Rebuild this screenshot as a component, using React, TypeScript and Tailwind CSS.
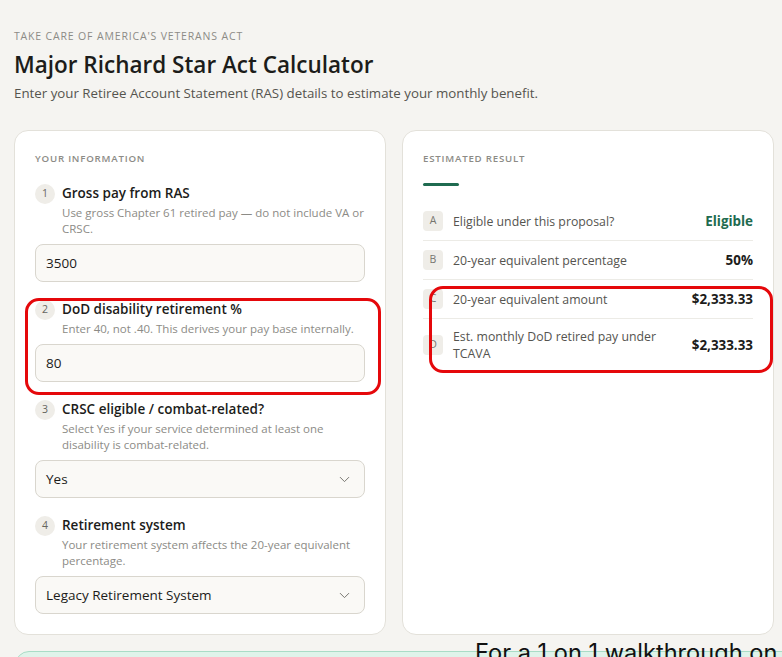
import { ChevronDown } from "lucide-react";

const font = { fontFamily: '"Open Sans", "Noto Sans", sans-serif' };

type Field = {
  n: string;
  label: string;
  hint: string;
  value: string;
  select?: boolean;
};

const fields: Field[] = [
  {
    n: "1",
    label: "Gross pay from RAS",
    hint: "Use gross Chapter 61 retired pay — do not include VA or CRSC.",
    value: "3500",
  },
  {
    n: "2",
    label: "DoD disability retirement %",
    hint: "Enter 40, not .40. This derives your pay base internally.",
    value: "80",
  },
  {
    n: "3",
    label: "CRSC eligible / combat-related?",
    hint: "Select Yes if your service determined at least one disability is combat-related.",
    value: "Yes",
    select: true,
  },
  {
    n: "4",
    label: "Retirement system",
    hint: "Your retirement system affects the 20-year equivalent percentage.",
    value: "Legacy Retirement System",
    select: true,
  },
];

const rows = [
  { k: "A", label: "Eligible under this proposal?", value: "Eligible", green: true },
  { k: "B", label: "20-year equivalent percentage", value: "50%" },
  { k: "C", label: "20-year equivalent amount", value: "$2,333.33" },
  { k: "D", label: "Est. monthly DoD retired pay under TCAVA", value: "$2,333.33" },
];

function FieldBlock({ f }: { f: Field }) {
  return (
    <div className="flex flex-col">
      <div className="flex items-start gap-[7px]">
        <span className="mt-px flex h-5 w-5 shrink-0 items-center justify-center rounded-full bg-[#efede8] text-[10.5px] text-[#66655f]">
          {f.n}
        </span>
        <div className="flex flex-col">
          <span className="text-[13.5px] font-semibold leading-5 text-[#1c1c1a]">{f.label}</span>
          <span className="mt-0.5 text-[11.5px] leading-4 text-[#8c8b86]">{f.hint}</span>
        </div>
      </div>
      <div className="mt-[7px] flex h-[38px] items-center justify-between rounded-lg border border-[#d9d6ce] bg-[#faf9f6] pl-[10px] pr-[11px] text-[13.5px] text-[#1c1c1a]">
        <span>{f.value}</span>
        {f.select && <ChevronDown size={17} strokeWidth={1.4} className="text-[#76756f]" />}
      </div>
    </div>
  );
}

export default function App() {
  return (
    <div className="relative min-h-[657px] overflow-hidden bg-[#f5f4f1]" style={font}>
      <div className="w-[760px] pl-[14px] pt-[28px]">
        <div className="text-[10.5px] font-medium uppercase leading-4 tracking-[0.08em] text-[#8c8b86]">
          Take care of America's Veterans Act
        </div>
        <h1 className="mt-[7px] text-[22.5px] font-semibold leading-7 text-[#1c1c1a]">
          Major Richard Star Act Calculator
        </h1>
        <p className="mt-[4px] text-[13.3px] leading-5 text-[#55544f]">
          Enter your Retiree Account Statement (RAS) details to estimate your monthly benefit.
        </p>
      </div>

      <div className="ml-[14px] mt-[27px] grid w-[760px] grid-cols-2 gap-4">
        <div className="relative rounded-[14px] border border-[#e3e1da] bg-white p-5">
          <div className="text-[9.7px] font-semibold uppercase leading-4 tracking-[0.08em] text-[#8c8b86]">
            Your information
          </div>
          <div className="mt-4 flex flex-col gap-[17px]">
            {fields.map((f) => (
              <FieldBlock key={f.n} f={f} />
            ))}
          </div>
          <div className="pointer-events-none absolute left-[10px] top-[167px] h-[97px] w-[356px] rounded-[14px] border-[3px] border-[#e5080b]" />
        </div>

        <div className="relative rounded-[14px] border border-[#e3e1da] bg-white p-5">
          <div className="text-[9.7px] font-semibold uppercase leading-4 tracking-[0.08em] text-[#8c8b86]">
            Estimated result
          </div>
          <div className="mt-4 h-[3px] w-9 rounded-full bg-[#1f6b50]" />
          <div className="mt-4 flex flex-col">
            {rows.map((r, i) => (
              <div
                key={r.k}
                className={`flex items-center gap-[10px] py-[9px] ${i < rows.length - 1 ? "border-b border-[#ecebe6]" : ""}`}
              >
                <span className="flex h-5 w-5 shrink-0 items-center justify-center rounded bg-[#efede8] text-[10.5px] text-[#76756f]">
                  {r.k}
                </span>
                <span className="flex-1 pr-6 text-[12.3px] leading-[17px] text-[#55544f]">{r.label}</span>
                <span
                  className={`text-[13.4px] font-bold ${r.green ? "text-[#1f6b50]" : "text-[#1c1c1a]"}`}
                >
                  {r.value}
                </span>
              </div>
            ))}
          </div>
          <div className="pointer-events-none absolute left-[26px] top-[155px] h-[87px] w-[344px] rounded-[14px] border-[3px] border-[#e5080b]" />
        </div>
      </div>

      <div className="ml-[15px] mt-4 h-[60px] w-[800px] rounded-[14px] border border-[#a9dcc6] bg-[#dff3ea]" />

      <div
        className="absolute left-[475px] top-[639px] whitespace-nowrap text-[23.6px] leading-7 text-[#111]"
        style={{ fontFamily: 'Inter, "Liberation Sans", sans-serif' }}
      >
        For a 1 on 1 walkthrough on
      </div>
    </div>
  );
}
